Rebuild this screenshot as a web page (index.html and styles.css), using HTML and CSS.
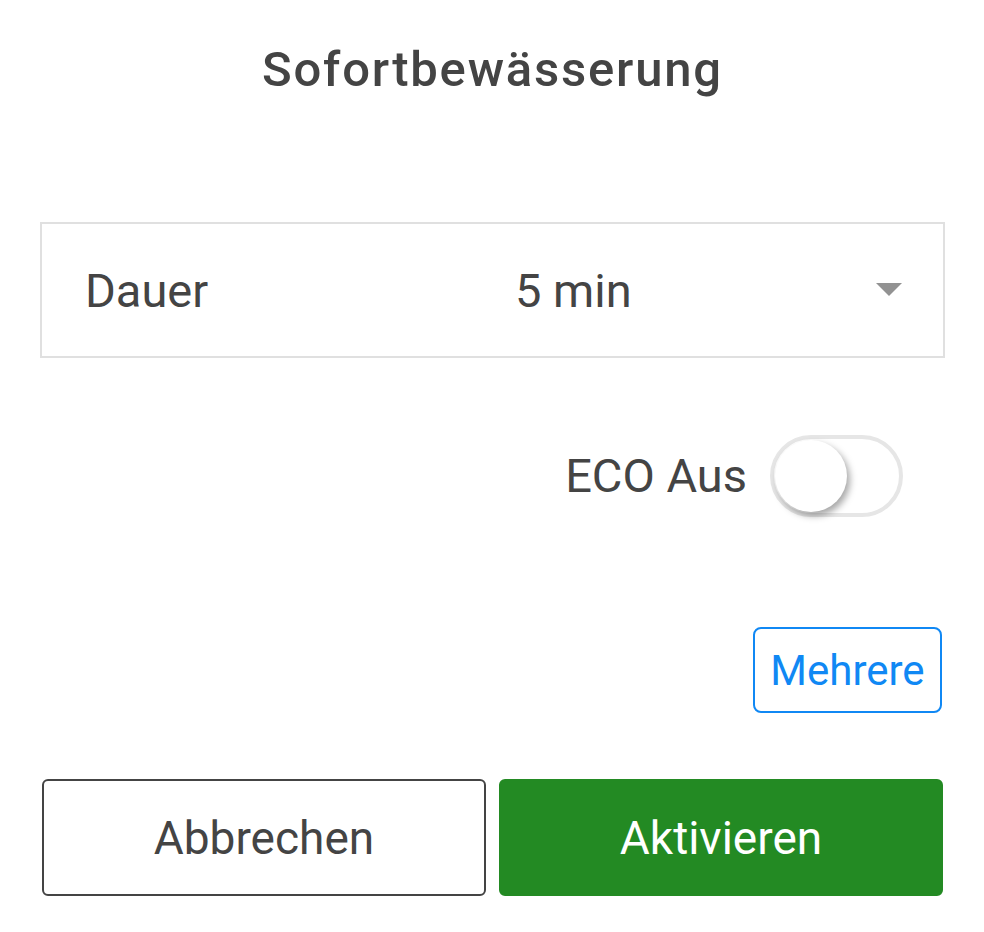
FILE: index.html
```html
<!DOCTYPE html>
<html lang="de">
<head>
    <meta charset="UTF-8">
    <meta name="viewport" content="width=device-width, initial-scale=1.0">
    <title>Sofortbewässerung</title>
    <link rel="stylesheet" href="styles.css">
</head>
<body>
    <div class="dialog">
        <h1 class="dialog-title">Sofortbewässerung</h1>

        <div class="select-box">
            <span class="select-label">Dauer</span>
            <span class="select-value">5 min</span>
            <span class="select-arrow"></span>
        </div>

        <div class="eco-row">
            <span class="eco-label">ECO Aus</span>
            <label class="toggle">
                <input type="checkbox">
                <span class="toggle-knob"></span>
            </label>
        </div>

        <div class="more-row">
            <button class="btn-more">Mehrere</button>
        </div>

        <div class="action-row">
            <button class="btn btn-cancel">Abbrechen</button>
            <button class="btn btn-activate">Aktivieren</button>
        </div>
    </div>
</body>
</html>
```

FILE: styles.css
```css
body {
    margin: 0;
    padding: 0;
    background-color: #fff;
    font-family: Roboto, "Noto Sans", Arial, sans-serif;
    color: #444;
}

.dialog {
    width: 905px;
    padding: 0 39px 0 40px;
}

.dialog-title {
    margin: 42px 0 0;
    font-size: 49px;
    line-height: 56px;
    font-weight: 500;
    letter-spacing: 1.8px;
    text-align: center;
    color: #444;
}

/* Dauer select */
.select-box {
    margin-top: 124px;
    height: 132px;
    border: 2px solid #e0e0e0;
    display: grid;
    grid-template-columns: 430px 1fr auto;
    align-items: center;
    padding: 0 41px 0 43px;
    font-size: 47px;
}

.select-arrow {
    width: 0;
    height: 0;
    border-left: 13px solid transparent;
    border-right: 13px solid transparent;
    border-top: 13px solid #929292;
    margin-bottom: 2px;
}

/* ECO toggle */
.eco-row {
    margin-top: 77px;
    display: flex;
    justify-content: flex-end;
    align-items: center;
    gap: 23px;
    padding-right: 42px;
}

.eco-label {
    font-size: 47px;
    line-height: 54px;
}

.toggle {
    position: relative;
    display: block;
    width: 133px;
    height: 82px;
    box-sizing: border-box;
    border: 4px solid #e6e6e6;
    border-radius: 41px;
    background: #fff;
    cursor: pointer;
}

.toggle input {
    display: none;
}

.toggle-knob {
    position: absolute;
    left: 1px;
    top: 1px;
    width: 72px;
    height: 72px;
    border-radius: 50%;
    background: #fff;
    box-shadow: 3px 4px 7px rgba(0, 0, 0, 0.35);
}

/* Mehrere */
.more-row {
    margin-top: 110px;
    display: flex;
    justify-content: flex-end;
    padding-right: 3px;
}

.btn-more {
    width: 189px;
    height: 86px;
    border: 2px solid #1088f4;
    border-radius: 8px;
    background: #fff;
    color: #1088f4;
    font-family: inherit;
    font-size: 42px;
    padding: 0;
    cursor: pointer;
}

/* Action buttons */
.action-row {
    margin-top: 66px;
    display: flex;
    gap: 13px;
    padding: 0 2px;
}

.btn {
    flex: 1;
    height: 117px;
    border-radius: 6px;
    font-family: inherit;
    font-size: 46px;
    cursor: pointer;
}

.btn-cancel {
    background: #fff;
    border: 2px solid #444;
    color: #444;
}

.btn-activate {
    background: #238a23;
    border: 2px solid #238a23;
    color: #fff;
}
```
